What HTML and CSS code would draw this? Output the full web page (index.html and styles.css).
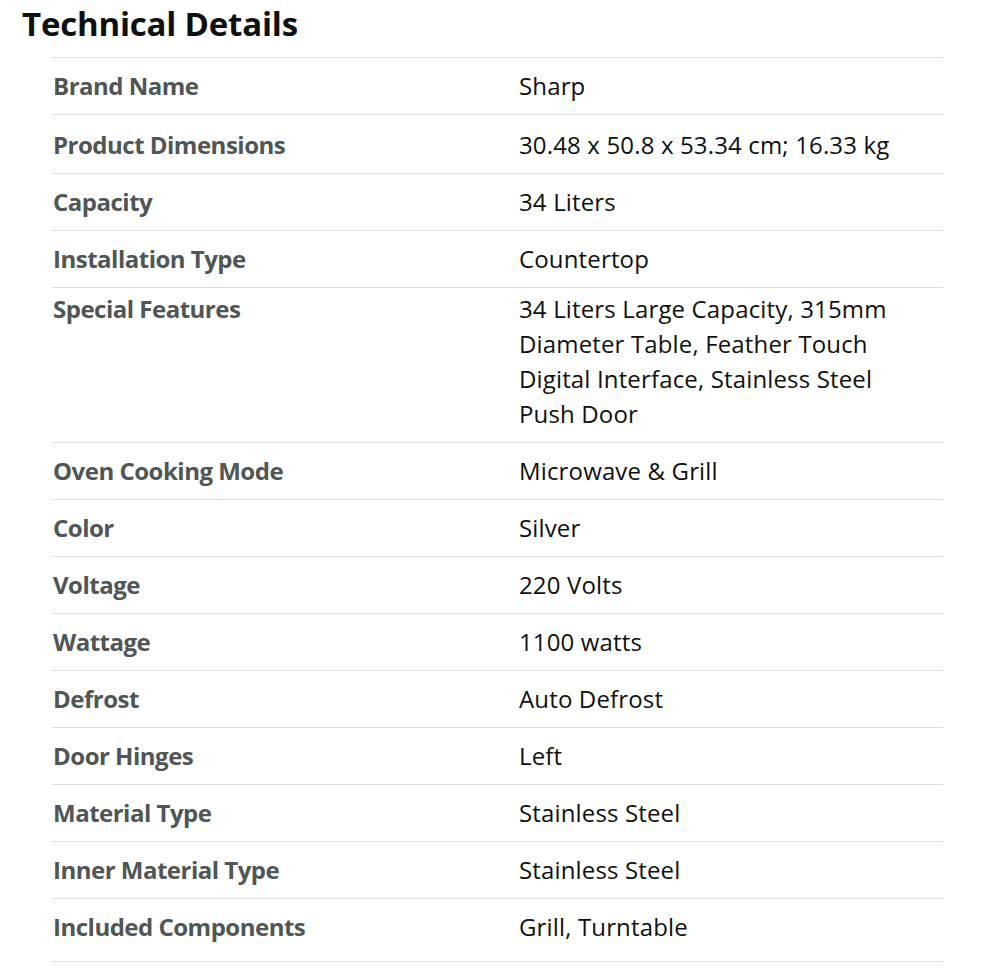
FILE: index.html
```html
<!DOCTYPE html>
<html lang="en">
<head>
<meta charset="utf-8">
<title>Technical Details</title>
<link rel="stylesheet" href="styles.css">
</head>
<body>
<section class="details">
  <h2 class="title">Technical Details</h2>
  <div class="table">
    <div class="row"><div class="label">Brand Name</div><div class="value">Sharp</div></div>
    <div class="row row-tall"><div class="label">Product Dimensions</div><div class="value">30.48 x 50.8 x 53.34 cm; 16.33 kg</div></div>
    <div class="row"><div class="label">Capacity</div><div class="value">34 Liters</div></div>
    <div class="row"><div class="label">Installation Type</div><div class="value">Countertop</div></div>
    <div class="row row-multi"><div class="label">Special Features</div><div class="value">34 Liters Large Capacity, 315mm Diameter Table, Feather Touch Digital Interface, Stainless Steel Push Door</div></div>
    <div class="row"><div class="label">Oven Cooking Mode</div><div class="value">Microwave &amp; Grill</div></div>
    <div class="row"><div class="label">Color</div><div class="value">Silver</div></div>
    <div class="row"><div class="label">Voltage</div><div class="value">220 Volts</div></div>
    <div class="row"><div class="label">Wattage</div><div class="value">1100 watts</div></div>
    <div class="row"><div class="label">Defrost</div><div class="value">Auto Defrost</div></div>
    <div class="row"><div class="label">Door Hinges</div><div class="value">Left</div></div>
    <div class="row"><div class="label">Material Type</div><div class="value">Stainless Steel</div></div>
    <div class="row"><div class="label">Inner Material Type</div><div class="value">Stainless Steel</div></div>
    <div class="row row-last"><div class="label">Included Components</div><div class="value">Grill, Turntable</div></div>
  </div>
</section>
</body>
</html>
```

FILE: styles.css
```css
html, body {
  margin: 0;
  padding: 0;
  background: #ffffff;
}

body {
  font-family: "Open Sans", "Noto Sans", sans-serif;
  color: #0f1111;
}

.title {
  margin: 7px 0 16px 22px;
  font-size: 33px;
  line-height: 34px;
  font-weight: 700;
  color: #0f1111;
  letter-spacing: -0.2px;
}

.table {
  margin-left: 52px;
  width: 891px;
  border-bottom: 1px solid #dddddd;
}

.row {
  display: grid;
  grid-template-columns: 467px 1fr;
  border-top: 1px solid #dddddd;
  padding: 10px 0 11px;
  font-size: 24px;
  line-height: 35px;
}

.row-tall {
  padding-top: 12px;
}

.row-multi {
  padding-top: 3px;
}

.row-last {
  padding-bottom: 17px;
}

.label {
  padding-left: 1px;
  font-weight: 700;
  letter-spacing: -0.5px;
  color: #505556;
}

.value {
  color: #0f1111;
  padding-right: 40px;
  letter-spacing: 0.15px;
}
```
